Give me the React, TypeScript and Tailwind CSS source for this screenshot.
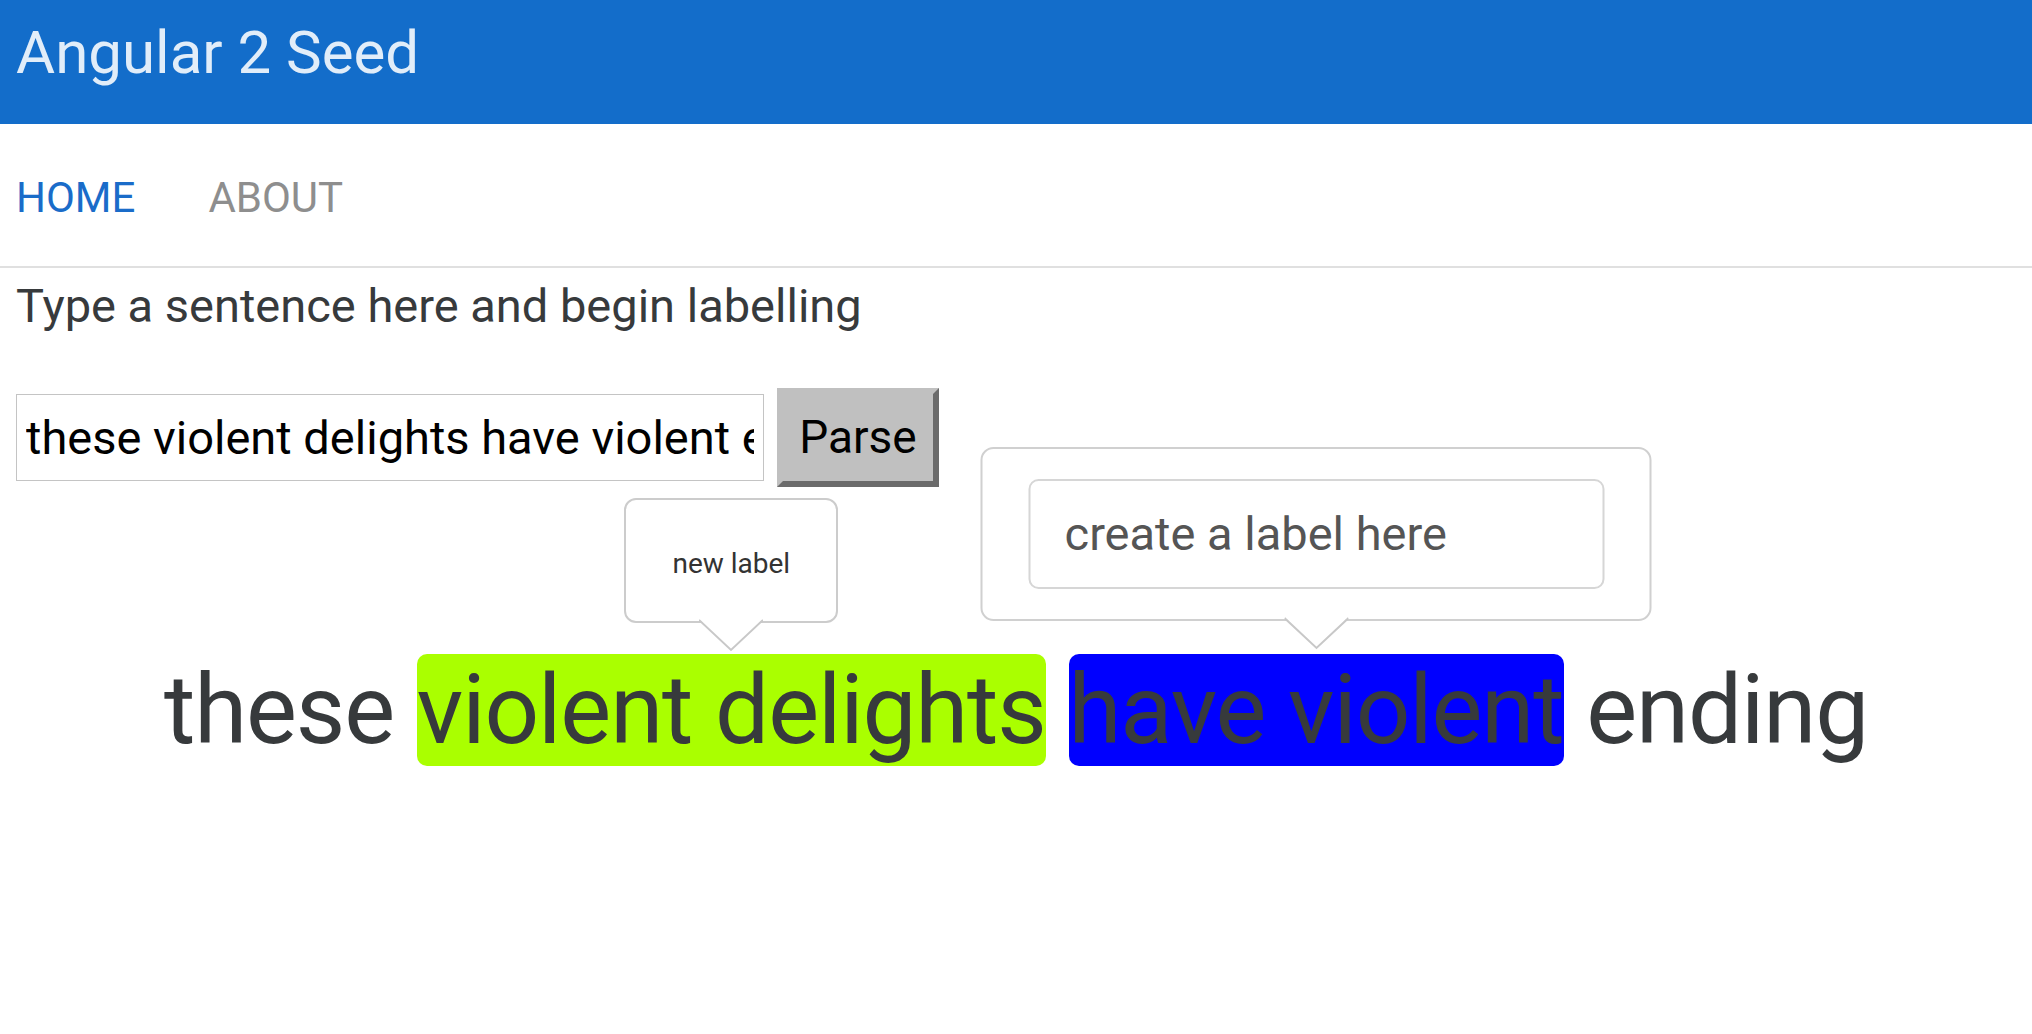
import React from "react";

function Arrow() {
  return (
    <svg
      className="absolute left-1/2 top-full -translate-x-1/2 -mt-[2px]"
      width="64"
      height="33"
      viewBox="0 0 64 33"
    >
      <polygon points="0,0 32,31 64,0" fill="#ffffff" />
      <polyline points="0,1 32,31 64,1" fill="none" stroke="#c8c8c8" strokeWidth="2" />
    </svg>
  );
}

function SmallTip() {
  return (
    <span className="absolute left-1/2 -translate-x-1/2 bottom-[calc(100%+31px)] block tracking-normal">
      <span className="relative flex w-[214px] h-[125px] items-center justify-center rounded-[12px] border-2 border-[#cccccc] bg-white pt-2 text-[28px] leading-normal text-[#333333] whitespace-nowrap">
        new label
        <Arrow />
      </span>
    </span>
  );
}

function BigTip() {
  return (
    <span className="absolute left-1/2 -translate-x-1/2 bottom-[calc(100%+33px)] block tracking-normal">
      <span className="relative block w-[671px] h-[174px] rounded-[13px] border-2 border-[#d0d0d0] bg-white pt-[30px] pl-[46px] text-left">
        <input
          type="text"
          placeholder="create a label here"
          className="block w-[576px] h-[110px] rounded-[10px] border-2 border-[#d6d6d6] pl-[34px] text-[47px] leading-normal text-[#333333] placeholder:text-[#555555] outline-none bg-white"
        />
        <Arrow />
      </span>
    </span>
  );
}

export default function App() {
  return (
    <div className="min-h-screen bg-white font-['Roboto',sans-serif]">
      <div className="h-[124px] bg-[#136dca] px-4">
        <h1 className="text-[60px] leading-[106px] font-normal text-[#e1edf9]">Angular 2 Seed</h1>
      </div>
      <nav className="flex h-[144px] gap-[73px] border-b-2 border-[#e0e0e0] px-4 pt-[6px]">
        <a className="text-[42px] leading-[136px] text-[#1a6cc9]">HOME</a>
        <a className="text-[42px] leading-[136px] text-[#8e8e8e]">ABOUT</a>
      </nav>
      <main className="px-4">
        <p className="mt-[3px] text-[47px] leading-normal text-[#373a3c]">
          Type a sentence here and begin labelling
        </p>
        <div className="mt-[46px] flex items-center gap-[13px]">
          <input
            type="text"
            readOnly
            value="these violent delights have violent ending"
            className="block w-[748px] h-[87px] border border-[#c4c4c4] px-[9px] text-[47px] leading-normal text-black outline-none"
          />
          <button className="h-[99px] w-[162px] border-[6px] border-t-[#c0c0c0] border-l-[#c0c0c0] border-r-[#6b6b6b] border-b-[#6b6b6b] bg-[#c0c0c0] text-[46px] leading-normal text-black">
            Parse
          </button>
        </div>
        <div className="mt-[151px] text-center text-[96px] leading-normal tracking-[-1.1px] text-[#373a3c] whitespace-nowrap">
          these{" "}
          <span className="relative rounded-[10px] bg-[#aaff00]">
            violent delights
            <SmallTip />
          </span>{" "}
          <span className="relative rounded-[10px] bg-[#0000ff]">
            have violent
            <BigTip />
          </span>{" "}
          ending
        </div>
      </main>
    </div>
  );
}
